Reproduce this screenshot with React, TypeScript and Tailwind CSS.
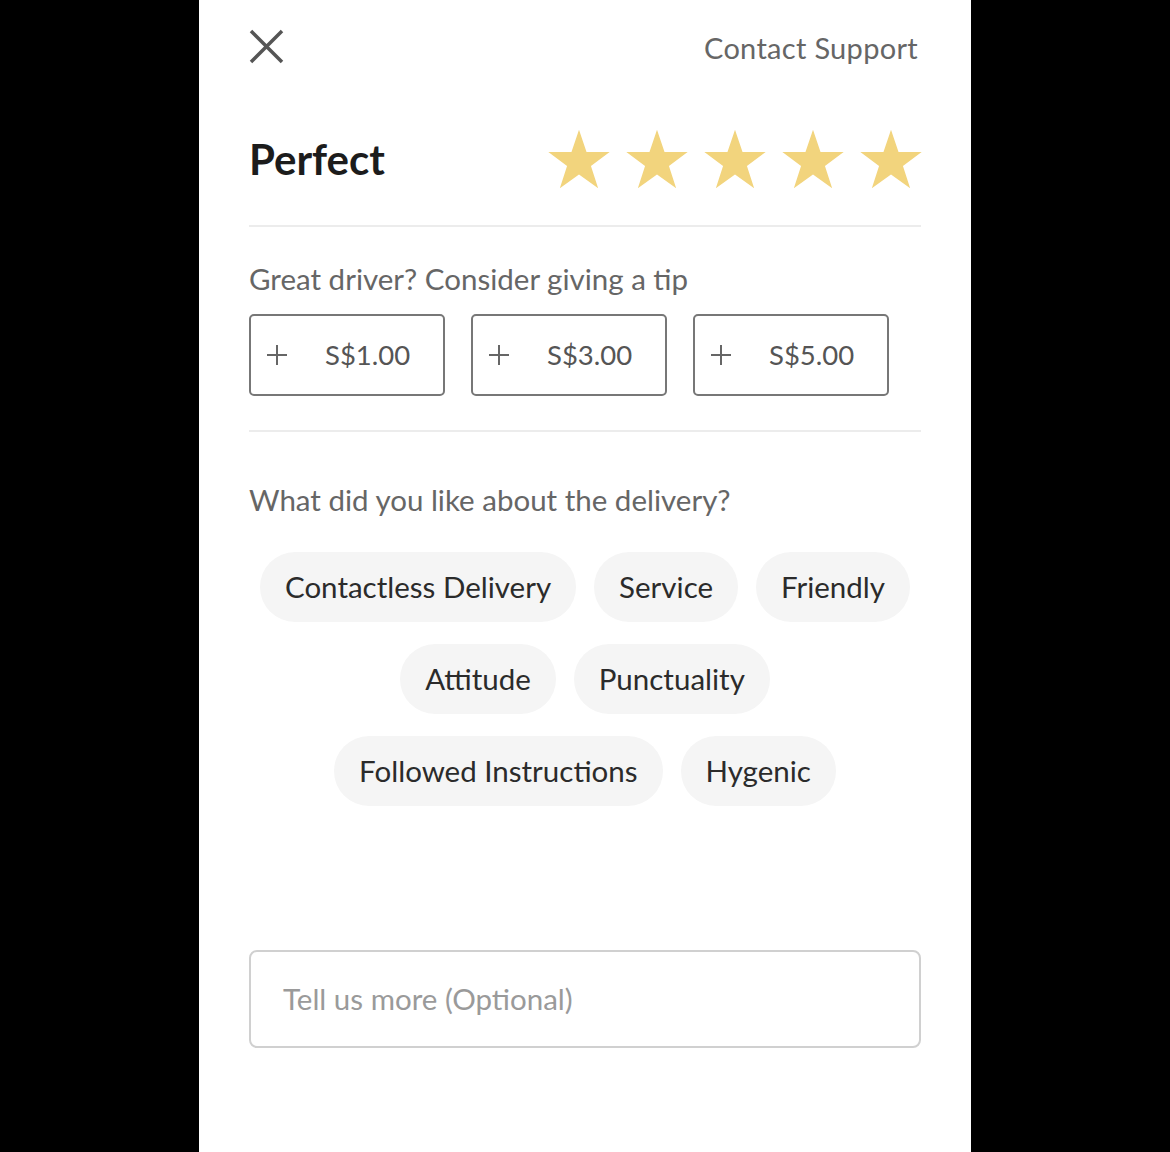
import React from "react";

const Star = () => (
  <svg width="64" height="62" viewBox="0 0 24 23" className="block">
    <path d="M12 0.5l2.82 8.4h8.68l-7.02 5.2 2.7 8.4L12 17.3l-7.18 5.2 2.7-8.4L0.5 8.9h8.68z" fill="#F2D47D" />
  </svg>
);

const Plus = () => (
  <svg width="22" height="22" viewBox="0 0 22 22" className="block">
    <path d="M11 1v20M1 11h20" stroke="#666" strokeWidth="2" />
  </svg>
);

const Chip = ({ label }: { label: string }) => (
  <div className="h-[70px] px-[25px] rounded-full bg-[#f5f5f5] flex items-center text-[29.5px] text-[#2b2b2b]">
    {label}
  </div>
);

const Tip = ({ amount }: { amount: string }) => (
  <div className="w-[196px] h-[82px] border-2 border-[#777] rounded-[5px] flex items-center pl-[15px]">
    <Plus />
    <span className="ml-[37px] text-[27.5px] text-[#555]">{amount}</span>
  </div>
);

export default function App() {
  return (
    <div className="w-[1170px] h-[1152px] bg-black flex justify-center" style={{ fontFamily: "Lato, 'Noto Sans', sans-serif" }}>
      <div className="w-[772px] h-full bg-white px-[50px] pt-[28px]">
        <div className="flex justify-between items-start">
          <svg width="38" height="38" viewBox="0 0 38 38" className="block ml-[-1px] mt-[0px]">
            <path d="M3 3L34 34M34 3L3 34" stroke="#555" strokeWidth="3.5" />
          </svg>
          <div className="text-[29px] text-[#666] leading-[28px] mt-[6px] mr-[3px] tracking-[0.3px]">Contact Support</div>
        </div>
        <div className="flex justify-between items-center mt-[61px] h-[64px]">
          <div className="text-[42px] font-bold text-[#1c1c1c] leading-none">Perfect</div>
          <div className="flex gap-[14px] mr-[-2px]">
            <Star />
            <Star />
            <Star />
            <Star />
            <Star />
          </div>
        </div>
        <div className="h-[2px] bg-[#ececec] mt-[34px]" />
        <div className="text-[29.5px] text-[#666] leading-[28px] mt-[38px]">Great driver? Consider giving a tip</div>
        <div className="flex gap-[26px] mt-[21px]">
          <Tip amount="S$1.00" />
          <Tip amount="S$3.00" />
          <Tip amount="S$5.00" />
        </div>
        <div className="h-[2px] bg-[#ececec] mt-[34px]" />
        <div className="text-[29.5px] text-[#666] leading-[28px] mt-[54px]">What did you like about the delivery?</div>
        <div className="flex flex-col gap-[22px] mt-[38px]">
          <div className="flex justify-center gap-[18px]">
            <Chip label="Contactless Delivery" />
            <Chip label="Service" />
            <Chip label="Friendly" />
          </div>
          <div className="flex justify-center gap-[18px]">
            <Chip label="Attitude" />
            <Chip label="Punctuality" />
          </div>
          <div className="flex justify-center gap-[18px]">
            <Chip label="Followed Instructions" />
            <Chip label="Hygenic" />
          </div>
        </div>
        <div className="mt-[144px] h-[98px] border-2 border-[#d0d0d0] rounded-[8px] flex items-center pl-[32px] text-[29.5px] text-[#9a9a9a]">
          Tell us more (Optional)
        </div>
      </div>
    </div>
  );
}
